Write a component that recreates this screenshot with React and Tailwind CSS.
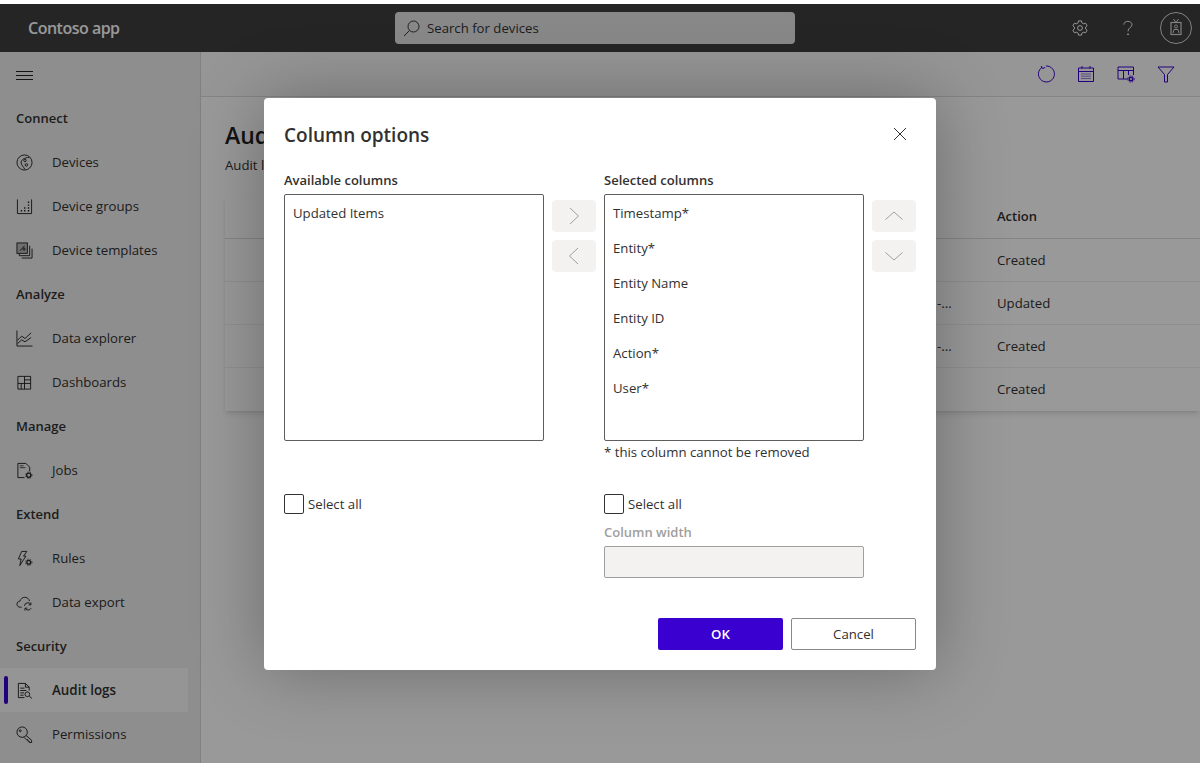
import React from "react";

const font = { fontFamily: '"Open Sans", "Noto Sans", sans-serif' };

const Icon = ({ children, className = "" }) => (
  <svg
    width="17"
    height="17"
    viewBox="0 0 18 18"
    fill="none"
    stroke="currentColor"
    strokeWidth="1"
    className={className}
  >
    {children}
  </svg>
);

const DevicesIcon = () => (
  <Icon>
    <circle cx="9" cy="9" r="8" />
    <path d="M14 3.5 C9 4 5 6 5.5 9.5 C5.8 12 8 13.5 9.5 16.5" />
    <circle cx="9.5" cy="6.8" r="1.3" />
    <circle cx="11" cy="11.5" r="1.3" />
  </Icon>
);
const GroupsIcon = () => (
  <Icon>
    <path d="M1.5 1.5 V16.5 H16.5 V1.5" />
    <path
      d="M5 13.5h1.5M8.5 13.5H10M12.5 13.5h1.5M8.5 10.5H10M12.5 10.5h1.5M12.5 7.5h1.5M12.5 4.5h1.5"
      strokeWidth="1.5"
    />
  </Icon>
);
const TemplatesIcon = () => (
  <Icon>
    <rect x="1" y="1" width="11" height="11" fill="currentColor" fillOpacity="0.25" />
    <path d="M3.5 14.5 V12 M3.5 14.5 H14.5 V4 M6 17 H17 V7" />
    <path d="M4 9.5 L9 4" />
    <circle cx="8.5" cy="7.5" r="1.2" />
  </Icon>
);
const ExplorerIcon = () => (
  <Icon>
    <path d="M1 0.5 V17 H17.5" />
    <path d="M1.5 11 L6 6.5 L9.5 9 L16 3" />
    <path d="M1.5 14.5 L6 10.5 L9.5 12.5 L16 8" />
  </Icon>
);
const DashboardsIcon = () => (
  <Icon>
    <path d="M2 2.5 H15.5 V16 H2 Z M2 10 H15.5 M9 2.5 V16 M9 6.2 H15.5 M5.5 10 V16" />
  </Icon>
);
const JobsIcon = () => (
  <Icon>
    <path d="M2 16.5 V1.5 H10.5 L14.5 5.5 V10 M2 16.5 H9" />
    <path d="M4 4h4M4 6h6" strokeWidth="0.8" />
    <circle cx="13.5" cy="14" r="2.2" strokeWidth="1.4" />
    <circle cx="13.5" cy="14" r="3.4" strokeWidth="0.8" strokeDasharray="1.4 1.4" />
  </Icon>
);
const RulesIcon = () => (
  <Icon>
    <path d="M6 1.5 H11.5 L8 6.5 H10.5 L4 16.5 L5.5 9.5 H2.5 Z" />
    <circle cx="13.5" cy="13" r="2" strokeWidth="1.4" />
    <circle cx="13.5" cy="13" r="3.4" strokeWidth="0.8" strokeDasharray="1.4 1.4" />
  </Icon>
);
const ExportIcon = () => (
  <Icon>
    <path d="M6 14 H4.5 C2.5 14 1 12.5 1 10.8 C1 9 2.5 7.5 4.2 7.6 C5 5 7 3.5 9.3 3.5 C12 3.5 14 5.4 14.3 7.5" />
    <path d="M9 12.5 A3.5 3.5 0 0 1 15.5 11 M16 15 A3.5 3.5 0 0 1 10 15.5" />
    <path d="M15.8 9 V11.5 H13.5 M9.5 17.5 V15 H12" />
  </Icon>
);
const AuditIcon = () => (
  <Icon>
    <path d="M9 16.5 H2.5 V1.5 H10 L14 5.5 V9" />
    <path d="M10 1.5 V5.5 H14 M4.5 6.5H9M4.5 9H11M4.5 11.5H8.5M4.5 14H8" />
    <circle cx="12" cy="13" r="2.5" />
    <path d="M14 15 L17 17.5" />
  </Icon>
);
const PermissionsIcon = () => (
  <Icon>
    <circle cx="6.5" cy="6.5" r="5.5" />
    <circle cx="4.5" cy="5" r="1" />
    <path d="M10.5 10 L16.5 15 V17.5 H14 V16 H12.5 V14.5 H11 L8.5 12" />
  </Icon>
);

const nav = [
  { section: "Connect" },
  { label: "Devices", icon: <DevicesIcon /> },
  { label: "Device groups", icon: <GroupsIcon /> },
  { label: "Device templates", icon: <TemplatesIcon /> },
  { section: "Analyze" },
  { label: "Data explorer", icon: <ExplorerIcon /> },
  { label: "Dashboards", icon: <DashboardsIcon /> },
  { section: "Manage" },
  { label: "Jobs", icon: <JobsIcon /> },
  { section: "Extend" },
  { label: "Rules", icon: <RulesIcon /> },
  { label: "Data export", icon: <ExportIcon /> },
  { section: "Security" },
  { label: "Audit logs", icon: <AuditIcon />, active: true },
  { label: "Permissions", icon: <PermissionsIcon /> },
];

const tableRows = [
  { id: "", action: "Created" },
  { id: "-...", action: "Updated" },
  { id: "-...", action: "Created" },
  { id: "", action: "Created" },
];

const selectedColumns = ["Timestamp*", "Entity*", "Entity Name", "Entity ID", "Action*", "User*"];

const Header = () => (
  <header className="h-12 shrink-0 bg-[#3e3e40] flex items-center">
    <div className="w-[395px] shrink-0 pl-7 text-[16px] font-semibold tracking-[-0.5px] text-white">
      Contoso app
    </div>
    <div className="w-[400px] h-8 shrink-0 bg-[#e3e3e3] rounded-sm flex items-center pl-2 gap-[7px] text-[13.2px] text-[#333]">
      <svg width="17" height="17" viewBox="0 0 17 17" fill="none" stroke="currentColor" strokeWidth="1">
        <circle cx="10.5" cy="6.5" r="5.5" />
        <path d="M6.5 10.5 L1 16" />
      </svg>
      <span className="pt-px">Search for devices</span>
    </div>
    <div className="flex-1 flex items-center justify-end text-white">
      <svg width="16" height="16" viewBox="0 0 18 18" fill="none" stroke="currentColor" strokeWidth="1.1" className="mr-[35px]">
        <path d="M7.3 1 H10.7 L11.2 3.3 L13 4.3 L15.3 3.6 L17 6.5 L15.3 8 V10 L17 11.5 L15.3 14.4 L13 13.7 L11.2 14.7 L10.7 17 H7.3 L6.8 14.7 L5 13.7 L2.7 14.4 L1 11.5 L2.7 10 V8 L1 6.5 L2.7 3.6 L5 4.3 L6.8 3.3 Z" />
        <circle cx="9" cy="9" r="2.7" />
      </svg>
      <svg width="10" height="16" viewBox="0 0 12 18" fill="none" stroke="currentColor" strokeWidth="1.1" className="mr-[27px]">
        <path d="M1 5 C1 2.5 3.2 1 5.8 1 C8.6 1 10.8 2.7 10.8 5 C10.8 8.5 6 8.5 6 13" />
        <circle cx="6" cy="16.5" r="0.6" fill="currentColor" />
      </svg>
      <svg width="32" height="32" viewBox="0 0 32 32" fill="none" stroke="currentColor" strokeWidth="1" className="mr-[8px] opacity-80">
        <circle cx="16" cy="16" r="15.5" />
        <rect x="11" y="10.5" width="10" height="12" strokeWidth="1.2" />
        <path d="M13.5 7 L16 10.5 L18.5 7" />
        <circle cx="16" cy="14.5" r="1.5" />
        <path d="M13 21 L14 17.5 H18 L19 21" />
      </svg>
    </div>
  </header>
);

const Sidebar = () => (
  <aside className="w-[201px] shrink-0 bg-[#ededed] border-r border-[#d8d8d8]">
    <div className="h-11 flex items-center pl-4 pt-0.5">
      <svg width="17" height="11" viewBox="0 0 17 11" stroke="#222" strokeWidth="1">
        <path d="M0 1.5H17M0 5.5H17M0 9.5H17" />
      </svg>
    </div>
    {nav.map((item) =>
      item.section ? (
        <div key={item.section} className="h-11 flex items-center pl-4 pt-0.5 text-[13px] font-semibold text-[#323130]">
          {item.section}
        </div>
      ) : (
        <div
          key={item.label}
          className={`h-11 w-[188px] relative flex items-center pl-4 text-[#323130] ${
            item.active ? "bg-[#f8f8f8] text-[13.4px] font-semibold" : "text-[13.2px]"
          }`}
        >
          {item.active && (
            <span className="absolute left-1 top-2 w-1 h-7 rounded-sm bg-[#3a00d0]" />
          )}
          <span className="w-9 shrink-0 text-[#252423]">{item.icon}</span>
          <span className={item.active ? "" : "pt-0.5"}>{item.label}</span>
        </div>
      ),
    )}
  </aside>
);

const Toolbar = () => (
  <div className="h-[45px] shrink-0 bg-[#fbfbfb] border-b border-[#dcdcdc] flex items-center justify-end gap-[22px] pr-[25px] text-[#3a00d0]">
    <svg width="18" height="18" viewBox="0 0 18 18" fill="none" stroke="currentColor" strokeWidth="1">
      <path d="M5.2 2.2 A8 8 0 1 0 9 1" />
      <path d="M4 1 L5.5 3.5 L8.2 2.5" />
    </svg>
    <svg width="18" height="18" viewBox="0 0 18 18" fill="none" stroke="currentColor" strokeWidth="1">
      <path d="M1.5 3 H16.5 V16.5 H1.5 Z M1.5 6.5 H16.5 M5 1 V3.5 M13 1 V3.5" />
      <path d="M4.5 9h9M4.5 11.2h9M4.5 13.5h9" strokeDasharray="1 1" />
    </svg>
    <svg width="18" height="18" viewBox="0 0 18 18" fill="none" stroke="currentColor" strokeWidth="1">
      <path d="M11 14 H1 V2 H16.5 V10 M1 5.5 H16.5 M6.5 5.5 V14 M11.5 5.5 V10" />
      <circle cx="14" cy="14" r="1.8" strokeWidth="1.4" />
      <circle cx="14" cy="14" r="3.2" strokeWidth="0.9" strokeDasharray="1.3 1.3" />
    </svg>
    <svg width="18" height="18" viewBox="0 0 18 18" fill="none" stroke="currentColor" strokeWidth="1">
      <path d="M1 2 H17 L10.5 9.5 V17 H7.5 V9.5 Z" />
    </svg>
  </div>
);

const Content = () => (
  <main className="flex-1 min-w-0 flex flex-col bg-white">
    <Toolbar />
    <div className="pl-6 pt-[22px]">
      <h1 className="text-[23px] leading-8 font-semibold text-[#201f1e]">Audit logs</h1>
      <p className="mt-[4px] text-[13.2px] leading-5 text-[#323130]">Audit logs</p>
      <div className="mt-[20px] shadow-md text-[13.2px] text-[#323130]">
        <div className="h-11 grid grid-cols-[772px_1fr] items-center border-b border-[#dcdcdc] bg-white">
          <span />
          <span className="text-[13px] font-semibold">Action</span>
        </div>
        {tableRows.map((row, i) => (
          <div key={i} className="h-[43px] grid grid-cols-[712px_60px_1fr] items-center pt-0.5 border-b border-[#efefef] last:border-b-transparent">
            <span />
            <span>{row.id}</span>
            <span>{row.action}</span>
          </div>
        ))}
      </div>
    </div>
  </main>
);

const ArrowButton = ({ d }) => (
  <button type="button" className="w-11 h-8 bg-[#f3f2f1] rounded-sm flex items-center justify-center text-[#a19f9d]">
    <svg width="18" height="18" viewBox="0 0 18 18" fill="none" stroke="currentColor" strokeWidth="1">
      <path d={d} />
    </svg>
  </button>
);

const ListBox = ({ items }) => (
  <div className="h-[247px] border border-[#605e5c] rounded-[2px] px-2 pt-[2px] text-[13.2px] text-[#323130]">
    {items.map((item) => (
      <div key={item} className="h-[35px] flex items-center">
        {item}
      </div>
    ))}
  </div>
);

const SelectAll = () => (
  <label className="flex items-center gap-1 h-5 text-[13.2px] text-[#323130]">
    <span className="w-5 h-5 border border-[#323130] rounded-[2px] bg-white" />
    <span className="pt-0.5">Select all</span>
  </label>
);

const ColumnOptionsDialog = () => (
  <div className="w-[672px] h-[572px] bg-white rounded-sm shadow-[0_0_70px_rgba(0,0,0,0.3)] flex flex-col px-5">
    <div className="h-[72px] shrink-0 flex items-center justify-between">
      <h2 className="text-[19px] font-semibold text-[#323130] pt-1">Column options</h2>
      <svg width="14" height="14" viewBox="0 0 14 14" stroke="#323130" strokeWidth="1" className="mr-[9px]">
        <path d="M1 1 L13 13 M13 1 L1 13" />
      </svg>
    </div>

    <div className="grid grid-cols-[260px_44px_260px_44px] gap-x-2 text-[13.2px]">
      <div className="h-6 text-[13px] font-semibold text-[#323130] leading-5">Available columns</div>
      <div />
      <div className="h-6 text-[13px] font-semibold text-[#323130] leading-5">Selected columns</div>
      <div />

      <ListBox items={["Updated Items"]} />
      <div className="flex flex-col gap-2 pt-1.5">
        <ArrowButton d="M5 1 L13.5 9 L5 17" />
        <ArrowButton d="M13 1 L4.5 9 L13 17" />
      </div>
      <ListBox items={selectedColumns} />
      <div className="flex flex-col gap-2 pt-1.5">
        <ArrowButton d="M0.5 12.5 L9 5 L17.5 12.5" />
        <ArrowButton d="M0.5 5.5 L9 13 L17.5 5.5" />
      </div>

      <div />
      <div />
      <div className="h-[53px] pt-[1px] leading-5 text-[#323130]">* this column cannot be removed</div>
      <div />

      <SelectAll />
      <div />
      <SelectAll />
      <div />

      <div />
      <div />
      <div className="mt-[8px]">
        <div className="h-6 leading-5 text-[13px] font-semibold text-[#a19f9d]">Column width</div>
        <div className="h-8 bg-[#f3f2f1] border border-[#a19f9d] rounded-[2px]" />
      </div>
      <div />
    </div>

    <div className="mt-10 flex justify-end gap-2 text-[13.2px]">
      <button type="button" className="w-[125px] h-8 bg-[#3900d0] rounded-[2px] text-white font-semibold pt-0.5">
        OK
      </button>
      <button type="button" className="w-[125px] h-8 bg-white border border-[#8a8886] rounded-[2px] text-[#323130] pt-0.5">
        Cancel
      </button>
    </div>
  </div>
);

export default function App() {
  return (
    <div className="h-screen overflow-hidden bg-white pt-1 flex flex-col" style={font}>
      <div className="relative flex-1 min-h-0 flex flex-col">
        <Header />
        <div className="flex-1 min-h-0 flex">
          <Sidebar />
          <Content />
        </div>
        <div className="absolute inset-0 bg-black/40 flex items-center justify-center">
          <ColumnOptionsDialog />
        </div>
      </div>
    </div>
  );
}
